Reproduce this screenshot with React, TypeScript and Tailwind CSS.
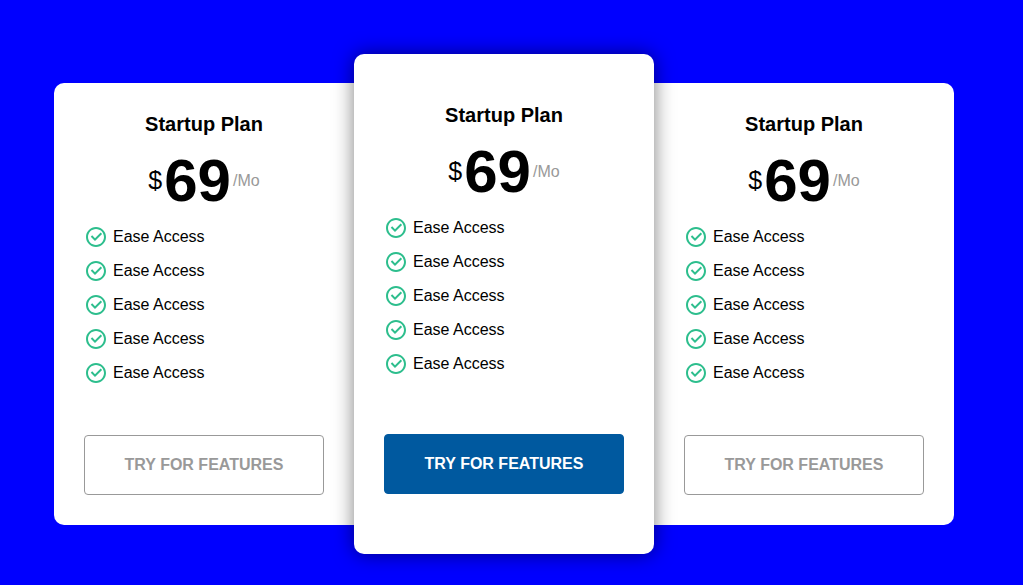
import { RiCheckboxCircleLine } from "react-icons/ri";

type Plan = {
  name: string;
  price: number;
  features: string[];
  featured?: boolean;
};

const features = Array.from({ length: 5 }, () => "Ease Access");

const plans: Plan[] = [
  { name: "Startup Plan", price: 69, features },
  { name: "Startup Plan", price: 69, features, featured: true },
  { name: "Startup Plan", price: 69, features },
];

function PlanCard({ plan, position }: { plan: Plan; position: string }) {
  return (
    <article
      className={`w-full max-w-[300px] bg-white px-[30px] ${position} ${
        plan.featured
          ? "z-10 pt-[50px] pb-[60px] shadow-[0_0_20px_rgba(0,0,0,0.5)]"
          : "py-[30px]"
      }`}
    >
      <h2 className="text-center text-[20px] leading-[23px] font-bold">{plan.name}</h2>
      <p className="my-[10px] flex items-center justify-center gap-[2px]">
        <span className="text-[25px]">$</span>
        <span className="text-[60px] leading-[69px] font-bold">{plan.price}</span>
        <span className="text-base text-[#999999]">/Mo</span>
      </p>
      <ul className="flex flex-col gap-[10px]">
        {plan.features.map((feature, i) => (
          <li key={i} className="flex items-center gap-[5px] text-base leading-6">
            <RiCheckboxCircleLine className="size-6 text-[#2dbe8d]" aria-hidden="true" />
            {feature}
          </li>
        ))}
      </ul>
      <button
        type="button"
        className={`h-[60px] w-full rounded border text-base font-bold uppercase ${
          plan.featured
            ? "mt-[58px] border-[#00599f] bg-[#00599f] text-white"
            : "mt-[50px] border-[#999999] bg-white text-[#999999]"
        }`}
      >
        Try for features
      </button>
    </article>
  );
}

export default function App() {
  const positions = ["rounded-l-[10px]", "rounded-[10px]", "rounded-r-[10px]"];
  return (
    <main className="flex min-h-screen items-start justify-center bg-[#0000ff] pt-[54px] pr-[15px] pb-[31px] font-['Liberation_Sans',Arial,sans-serif] text-black">
      <section className="flex grow items-center justify-center" aria-label="Pricing plans">
        {plans.map((plan, i) => (
          <PlanCard key={i} plan={plan} position={positions[i]} />
        ))}
      </section>
    </main>
  );
}
